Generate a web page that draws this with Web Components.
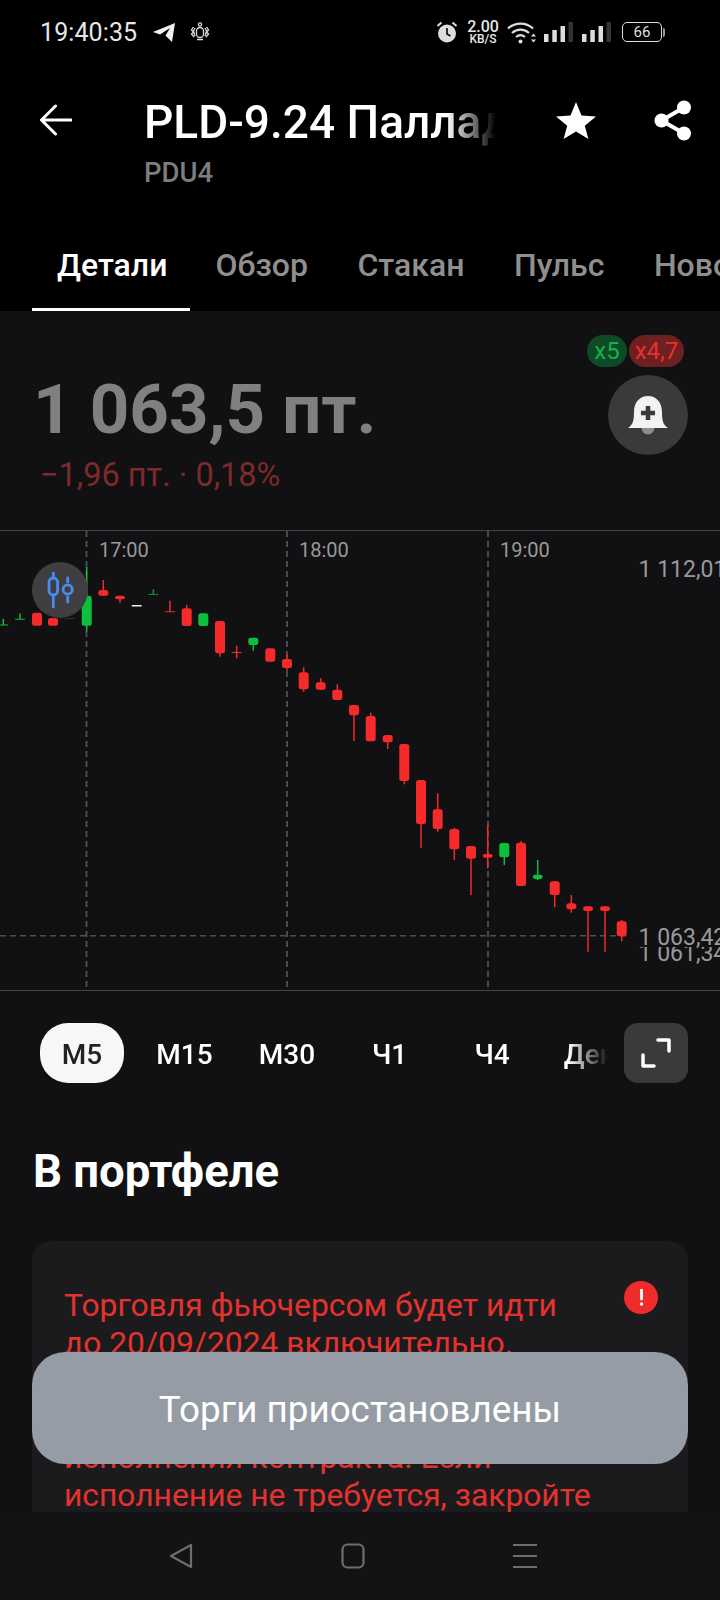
<!DOCTYPE html>
<html lang="ru">
<head>
<meta charset="utf-8">
<title>PLD-9.24</title>
<style>
  html, body { margin: 0; background: #000; }
  body { font-family: Roboto, "Liberation Sans", sans-serif; }
</style>
</head>
<body>
<app-screen>
  <status-bar></status-bar>
  <title-bar name="PLD-9.24 Палладий" ticker="PDU4"></title-bar>
  <detail-tabs></detail-tabs>
  <quote-panel></quote-panel>
  <candle-chart></candle-chart>
  <interval-row></interval-row>
  <portfolio-block></portfolio-block>
</app-screen>
<script>
const appTemplate = document.createElement("template");
appTemplate.innerHTML = `
<style>
  :host {
    display: flex;
    flex-direction: column;
    position: relative;
    width: 720px;
    height: 1600px;
    overflow: hidden;
    background: #111113;
    color: #fff;
  }
  .content { flex: 1; min-height: 0; overflow: hidden; display: flex; flex-direction: column; }
  nav-bar { flex: none; }
  toast-note { position: absolute; left: 32px; right: 32px; top: 1352px; }
</style>
<div class="content"><slot></slot></div>
<nav-bar></nav-bar>
<toast-note>Торги приостановлены</toast-note>
`;
class AppScreen extends HTMLElement {
  constructor() {
    super();
    this.attachShadow({ mode: "open" });
    this.shadowRoot.appendChild(appTemplate.content.cloneNode(true));
  }
}

const statusTemplate = document.createElement("template");
statusTemplate.innerHTML = `
<style>
  :host {
    display: flex;
    flex: none;
    align-items: center;
    height: 64px;
    background: #000;
    padding: 0 55px 0 40px;
    box-sizing: border-box;
    color: #e6e6e6;
  }
  .time { font-size: 25px; width: 113px; letter-spacing: .1px; }
  svg { display: block; flex: none; }
  .bug { margin-left: 14px; }
  .right { margin-left: auto; display: flex; align-items: center; }
  .speed { display: flex; flex-direction: column; align-items: center; width: 34px; margin: 0 7px 0 8px; line-height: 1; }
  .speed b { font-weight: 500; font-size: 16px; line-height: 14px; }
  .speed i { font-style: normal; font-weight: 500; font-size: 12px; line-height: 11px; }
  .bars { margin-left: 7px; }
  .bars + .bars { margin-left: 9px; }
  .battery {
    display: flex; align-items: center; justify-content: center;
    box-sizing: border-box;
    width: 40px; height: 20px;
    margin-left: 11px;
    border: 1.5px solid #ddd;
    border-radius: 5px;
    font-size: 15px;
    color: #ddd;
  }
  .nub { width: 2px; height: 9px; background: #999; margin-left: 1px; border-radius: 0 2px 2px 0; }
</style>
<span class="time">19:40:35</span>
<svg width="22" height="20" viewBox="0 0 22 20"><path d="M0 10 22 1 19 20 12.5 13.5 17 6 7 12.5Z" fill="#f0f0f0"/></svg>
<svg class="bug" width="22" height="20" viewBox="0 0 22 20" fill="none" stroke="#ddd" stroke-width="1.3"><rect x="7.5" y="5.5" width="7" height="10" rx="3.5"/><circle cx="11" cy="2.5" r="1.6"/><path d="M8 17.5h6M4.5 5 2.5 8l2 2-2 2 2.5 3M17.5 5l2 3-2 2 2 2-2.500 3M6 6 4.500 9l1.500 5M16 6l1.500 3-1.500 5"/></svg>
<div class="right">
  <svg width="22" height="22" viewBox="0 0 22 22"><circle cx="11" cy="12.500" r="9" fill="#ddd"/><path d="M11 7v6l3.500 2" fill="none" stroke="#111" stroke-width="1.700"/><path d="M1.500 5 5.500 1.500M20.500 5 16.500 1.500" stroke="#ddd" stroke-width="2"/></svg>
  <div class="speed"><b>2.00</b><i>KB/S</i></div>
  <svg width="30" height="23" viewBox="0 0 30 23" fill="none" stroke="#ddd" stroke-width="2.200"><path d="M1 7.500C8 1 19 1 26 7.500M5 12c5-4.500 12-4.500 17 0M9 16c3-2.500 6-2.500 9 0"/><circle cx="13.500" cy="20.500" r="2" fill="#ddd" stroke="none"/><path d="M24 15.500h5l-2.500-3ZM24 18.500h5l-2.500 3Z" fill="#ddd" stroke="none"/></svg>
  <svg class="bars" width="29" height="20" viewBox="0 0 29 20"><rect x="0" y="12" width="4.500" height="8" fill="#ddd"/><rect x="8.300" y="8" width="4.500" height="12" fill="#ddd"/><rect x="16.500" y="4" width="4.500" height="16" fill="#ddd"/><rect x="24.500" y="0" width="4.500" height="20" fill="#333"/></svg>
  <svg class="bars" width="29" height="20" viewBox="0 0 29 20"><rect x="0" y="12" width="4.500" height="8" fill="#ddd"/><rect x="8.300" y="8" width="4.500" height="12" fill="#ddd"/><rect x="16.500" y="4" width="4.500" height="16" fill="#ddd"/><rect x="24.500" y="0" width="4.500" height="20" fill="#333"/></svg>
  <div class="battery">66</div><div class="nub"></div>
</div>
`;
class StatusBar extends HTMLElement {
  constructor() {
    super();
    this.attachShadow({ mode: "open" });
    this.shadowRoot.appendChild(statusTemplate.content.cloneNode(true));
  }
}

const titleTemplate = document.createElement("template");
titleTemplate.innerHTML = `
<style>
  :host {
    display: flex;
    flex: none;
    height: 140px;
    background: #000;
    box-sizing: border-box;
    padding: 34px 30px 0 40px;
  }
  svg { display: block; flex: none; }
  .back { margin-top: 6px; }
  .names { width: 352px; margin-left: 72px; }
  .name {
    font-size: 46px;
    font-weight: 500;
    line-height: 48px;
    white-space: nowrap;
    overflow: hidden;
    -webkit-mask-image: linear-gradient(to right, #000 86%, transparent 100%);
    mask-image: linear-gradient(to right, #000 86%, transparent 100%);
  }
  .ticker { font-size: 27.5px; font-weight: 500; color: #7d7d7d; line-height: 30px; margin-top: 12px; }
  .star { margin: 4px 0 0 60px; }
  .share { margin: 2px 0 0 58px; }
</style>
<svg class="back" width="32" height="32" viewBox="0 0 32 32" fill="none" stroke="#fff" stroke-width="3" stroke-linecap="round" stroke-linejoin="round"><path d="M31 16H2M15.500 2 1.500 16l14 14"/></svg>
<div class="names"><div class="name"></div><div class="ticker"></div></div>
<svg class="star" width="40" height="37" viewBox="0 0 40 37"><path d="M20 0l5.500 13.500L40 14.500 28.800 23.800 32.400 37 20 29.500 7.600 37 11.200 23.800 0 14.500 14.500 13.500Z" fill="#fff"/></svg>
<svg class="share" width="38" height="41" viewBox="0 0 38 41" fill="none"><path d="M30 7.500 7.500 20.500 30 33.500" stroke="#fff" stroke-width="4"/><circle cx="30" cy="7.500" r="7" fill="#fff"/><circle cx="30" cy="33.500" r="7" fill="#fff"/><circle cx="7.500" cy="20.500" r="7" fill="#fff"/></svg>
`;
class TitleBar extends HTMLElement {
  constructor() {
    super();
    this.attachShadow({ mode: "open" });
    this.shadowRoot.appendChild(titleTemplate.content.cloneNode(true));
    this.shadowRoot.querySelector(".name").textContent = this.getAttribute("name");
    this.shadowRoot.querySelector(".ticker").textContent = this.getAttribute("ticker");
  }
}

const tabsTemplate = document.createElement("template");
tabsTemplate.innerHTML = `
<style>
  :host {
    display: flex;
    flex: none;
    height: 107px;
    background: #000;
    padding-left: 32px;
    overflow: hidden;
    box-sizing: border-box;
  }
  div {
    flex: none;
    box-sizing: border-box;
    height: 107px;
    padding: 42px 25.500px 0 24px;
    font-size: 32px;
    font-weight: 500;
    line-height: 38px;
    color: #8f8f8f;
  }
  .on { color: #fff; border-bottom: 3px solid #fff; padding-left: 25px; padding-right: 23px; }
  .on + div { padding-left: 25px; }
</style>
<div class="on">Детали</div><div>Обзор</div><div>Стакан</div><div>Пульс</div><div>Новости</div>
`;
class DetailTabs extends HTMLElement {
  constructor() {
    super();
    this.attachShadow({ mode: "open" });
    this.shadowRoot.appendChild(tabsTemplate.content.cloneNode(true));
  }
}

const quoteTemplate = document.createElement("template");
quoteTemplate.innerHTML = `
<style>
  :host {
    display: flex;
    flex: none;
    justify-content: space-between;
    height: 219px;
    box-sizing: border-box;
    padding: 24px 32px 0 33px;
  }
  .price { font-size: 69px; font-weight: 700; color: #808080; line-height: 80px; margin-top: 35px; white-space: nowrap; }
  .change { font-size: 32.5px; color: #7c2a2a; line-height: 36px; margin: 7px 0 0 7px; }
  .side { display: flex; flex-direction: column; align-items: flex-end; }
  .badges { display: flex; gap: 2px; margin-right: 4px; }
  .badges span { height: 32px; line-height: 32px; border-radius: 16px; font-size: 24px; text-align: center; }
  .long { width: 40px; background: #0f4a26; color: #18b04b; }
  .short { width: 55px; background: #6e1f20; color: #ea2f2d; }
  .bell { width: 80px; height: 80px; border-radius: 50%; background: #3a3a3c; margin-top: 8px; display: flex; align-items: center; justify-content: center; }
</style>
<div>
  <div class="price">1 063,5 пт.</div>
  <div class="change">−1,96 пт. · 0,18%</div>
</div>
<div class="side">
  <div class="badges"><span class="long">x5</span><span class="short">x4,7</span></div>
  <div class="bell">
    <svg width="40" height="40" viewBox="0 0 40 40"><circle cx="20" cy="33" r="6.500" fill="#8d8d8f"/><path d="M0 33c5-3 6-8 6-16C6 7 12 1 20 1s14 6 14 16c0 8 1 13 6 16Z" fill="#f2f2f2"/><path d="M20 11v14M13 18h14" stroke="#3a3a3c" stroke-width="4.500"/></svg>
  </div>
</div>
`;
class QuotePanel extends HTMLElement {
  constructor() {
    super();
    this.attachShadow({ mode: "open" });
    this.shadowRoot.appendChild(quoteTemplate.content.cloneNode(true));
  }
}

const chartTemplate = document.createElement("template");
chartTemplate.innerHTML = `
<style>
  :host {
    display: block;
    flex: none;
    position: relative;
    height: 461px;
    box-sizing: border-box;
    border-top: 1px solid #444446;
    border-bottom: 1px solid #444446;
    overflow: hidden;
  }
  svg.plot { display: block; position: absolute; left: 0; top: 0; }
  svg.plot text { font-family: Roboto, "Liberation Sans", sans-serif; fill: #9a9a9a; }
  .toggle {
    position: absolute; left: 32px; top: 31px;
    width: 56px; height: 56px; border-radius: 50%;
    background: #3f3f41;
    display: flex; align-items: center; justify-content: center;
  }
</style>
<svg class="plot" width="720" height="459" viewBox="0 531 720 459"></svg>
<div class="toggle">
  <svg width="28" height="36" viewBox="0 0 28 36" fill="none" stroke="#4a8bf0" stroke-width="2.800" stroke-linecap="round"><path d="M7.300 1v5M7.300 23v12M21.700 6v4M21.700 25v5"/><rect x="3" y="6" width="8.600" height="17" rx="4.300"/><circle cx="21.700" cy="17.500" r="4.600"/></svg>
</div>
`;
// x, bodyTop, bodyBottom, wickTop, wickBottom, colour
const R = "#f52a2a", G = "#0cbf3c", W = "#f0f0f0";
const candles = [
  [3.3, 624.5, 625.5, 619, 625, G], [20, 618.7, 619.7, 613.5, 619, G],
  [37, 612.7, 625.7, 0, 0, R], [53, 618, 625.7, 0, 0, R], [70, 618, 618.8, 0, 0, "#6b2424"],
  [86.7, 595.7, 625.7, 567, 631.7, G], [103.3, 590, 595.7, 580, 596, R],
  [120, 595.7, 599.3, 596, 602.7, R], [136.7, 605, 606.5, 0, 0, W],
  [153.3, 594, 595, 589.3, 595, "#0c8f30"], [170, 611.2, 612.2, 600.7, 612, R],
  [186.7, 608.3, 626, 605, 626, R], [203.3, 613.3, 626, 0, 0, G],
  [220, 621, 653.3, 621, 656.7, R], [236.7, 652, 653, 645.7, 658.3, R],
  [253.3, 637.7, 645, 638, 650.7, G], [270.3, 648.3, 661.7, 0, 0, R],
  [287, 659, 668, 654, 670.7, R], [303.7, 672.3, 689.3, 667.3, 691.7, R],
  [320.7, 682.3, 689.7, 678.3, 690, R], [337.3, 689.7, 700, 684.3, 700, R],
  [354, 705, 715.3, 705, 741, R], [370.7, 716, 741.3, 712.7, 741, R],
  [387.7, 735, 742.3, 735, 749, R], [404.3, 744, 781, 744, 784.3, R],
  [421, 780, 824, 780, 847.7, R], [437.7, 809.3, 829, 793.3, 831.7, R],
  [454.3, 829, 849.3, 827.7, 860, R], [471, 846, 858.7, 846, 895, R],
  [487.7, 854, 857.7, 825, 868.3, R], [504.3, 843, 857.3, 843, 865, G],
  [521, 842.7, 886, 841, 886, R], [537.7, 874.7, 879, 860, 880, G],
  [554.7, 881.3, 895, 881, 907.3, R], [571.3, 903.3, 909.3, 895, 912.7, R],
  [588, 906.3, 911, 906, 951.7, R], [605, 906.3, 911, 906, 951.7, R],
  [621.7, 921.3, 936.3, 920, 941.3, R],
];
class CandleChart extends HTMLElement {
  constructor() {
    super();
    this.attachShadow({ mode: "open" });
    this.shadowRoot.appendChild(chartTemplate.content.cloneNode(true));
    let s = "";
    [86.5, 287, 488].forEach((x) => {
      s += `<line x1="${x}" x2="${x}" y1="531" y2="990" stroke="#505052" stroke-width="1.800" stroke-dasharray="6 4"/>`;
    });
    s += `<line x1="0" x2="628" y1="935.700" y2="935.700" stroke="#505052" stroke-width="1.500" stroke-dasharray="6 4"/>`;
    [["17:00", 99], ["18:00", 299], ["19:00", 500]].forEach(([t, x]) => {
      s += `<text x="${x}" y="557" font-size="20">${t}</text>`;
    });
    candles.forEach(([x, top, bot, wt, wb, c]) => {
      if (wt) s += `<line x1="${x}" x2="${x}" y1="${wt}" y2="${wb}" stroke="${c}" stroke-width="1.500"/>`;
      const h = bot - top;
      s += `<rect x="${x - 5}" y="${top}" width="10" height="${h}" rx="${h > 3 ? 2.5 : 0.5}" fill="${c}"/>`;
    });
    s += `<text x="638.500" y="576.500" font-size="23">1 112,01</text>`;
    s += `<text x="638.500" y="961" font-size="23">1 061,34</text>`;
    s += `<rect x="630" y="925" width="90" height="22" fill="#111113"/>`;
    s += `<text x="638.500" y="944.500" font-size="23">1 063,42</text>`;
    this.shadowRoot.querySelector("svg.plot").innerHTML = s;
  }
}

const intervalTemplate = document.createElement("template");
intervalTemplate.innerHTML = `
<style>
  :host {
    display: flex;
    flex: none;
    align-items: flex-start;
    box-sizing: border-box;
    padding: 32px 32px 0 40px;
    height: 92px;
  }
  .list {
    display: flex;
    gap: 18.500px;
    width: 568px;
    overflow: hidden;
    -webkit-mask-image: linear-gradient(to right, #000 93%, transparent 100%);
    mask-image: linear-gradient(to right, #000 93%, transparent 100%);
  }
  .list div {
    flex: none;
    width: 84px;
    height: 60px;
    line-height: 64px;
    text-align: center;
    font-size: 28px;
    font-weight: 500;
    border-radius: 28px;
  }
  .list .on { background: #f5f7f9; color: #222; }
  .list div:last-child { margin-left: 3px; }
  button {
    all: unset;
    box-sizing: border-box;
    margin-left: auto;
    width: 64px;
    height: 60px;
    border-radius: 14px;
    background: #3a3a3c;
    display: flex; align-items: center; justify-content: center;
  }
</style>
<div class="list"><div class="on">М5</div><div>М15</div><div>М30</div><div>Ч1</div><div>Ч4</div><div>День</div></div>
<button><svg width="30" height="30" viewBox="0 0 30 30" fill="none" stroke="#fff" stroke-width="3.500" stroke-linecap="round" stroke-linejoin="round"><path d="M17 2h11v11M2 17v11h11"/></svg></button>
`;
class IntervalRow extends HTMLElement {
  constructor() {
    super();
    this.attachShadow({ mode: "open" });
    this.shadowRoot.appendChild(intervalTemplate.content.cloneNode(true));
  }
}

const portfolioTemplate = document.createElement("template");
portfolioTemplate.innerHTML = `
<style>
  :host { display: block; flex: none; padding: 0 32px; }
  h2 { margin: 0 0 0 1px; font-size: 45.500px; font-weight: 700; line-height: 50px; padding-top: 64px; }
  .card {
    display: flex;
    margin-top: 44px;
    background: #1b1b1e;
    border-radius: 20px;
    padding: 45px 30px 30px 32px;
    color: #e4322f;
    font-size: 31.800px;
    line-height: 38px;
  }
  .card p { margin: 0; flex: 1; white-space: nowrap; }
  .alert {
    flex: none; width: 34px; height: 33px; border-radius: 50%;
    background: #ef2b2b; color: #fff;
    display: flex; align-items: center; justify-content: center;
    margin-top: -5px;
  }
</style>
<h2>В портфеле</h2>
<div class="card">
  <p>Торговля фьючерсом будет идти<br>до 20/09/2024 включительно.<br>&nbsp;<br>&nbsp;<br>исполнения контракта. Если<br>исполнение не требуется, закройте</p>
  <div class="alert"><svg width="5" height="17" viewBox="0 0 5 17"><path d="M2.500 1v9" stroke="#fff" stroke-width="2.800" stroke-linecap="round"/><circle cx="2.500" cy="15" r="1.700" fill="#fff"/></svg></div>
</div>
`;
class PortfolioBlock extends HTMLElement {
  constructor() {
    super();
    this.attachShadow({ mode: "open" });
    this.shadowRoot.appendChild(portfolioTemplate.content.cloneNode(true));
  }
}

const toastTemplate = document.createElement("template");
toastTemplate.innerHTML = `
<style>
  :host {
    display: flex;
    align-items: center;
    justify-content: center;
    box-sizing: border-box;
    height: 112px;
    padding-top: 2px;
    border-radius: 33px;
    background: #969ca6;
    color: #fff;
    font-size: 36.800px;
  }
</style>
<slot></slot>
`;
class ToastNote extends HTMLElement {
  constructor() {
    super();
    this.attachShadow({ mode: "open" });
    this.shadowRoot.appendChild(toastTemplate.content.cloneNode(true));
  }
}

const navTemplate = document.createElement("template");
navTemplate.innerHTML = `
<style>
  :host {
    display: flex;
    align-items: flex-start;
    justify-content: space-between;
    box-sizing: border-box;
    height: 88px;
    background: #131315;
    padding: 31px 183px 0 169px;
  }
  svg { display: block; }
</style>
<svg width="24" height="26" viewBox="0 0 24 26" fill="none" stroke="#6e6e70" stroke-width="2.200" stroke-linejoin="round"><path d="M22 2v22L2 13Z"/></svg>
<svg width="24" height="26" viewBox="0 0 24 26" fill="none" stroke="#6e6e70" stroke-width="2.200"><rect x="1.500" y="1.500" width="21" height="23" rx="5"/></svg>
<svg width="24" height="26" viewBox="0 0 24 26" fill="none" stroke="#6e6e70" stroke-width="2.200"><path d="M0 2h24M0 13h24M0 24h24"/></svg>
`;
class NavBar extends HTMLElement {
  constructor() {
    super();
    this.attachShadow({ mode: "open" });
    this.shadowRoot.appendChild(navTemplate.content.cloneNode(true));
  }
}

window.customElements.define("status-bar", StatusBar);
window.customElements.define("title-bar", TitleBar);
window.customElements.define("detail-tabs", DetailTabs);
window.customElements.define("quote-panel", QuotePanel);
window.customElements.define("candle-chart", CandleChart);
window.customElements.define("interval-row", IntervalRow);
window.customElements.define("portfolio-block", PortfolioBlock);
window.customElements.define("toast-note", ToastNote);
window.customElements.define("nav-bar", NavBar);
window.customElements.define("app-screen", AppScreen);
</script>
</body>
</html>
